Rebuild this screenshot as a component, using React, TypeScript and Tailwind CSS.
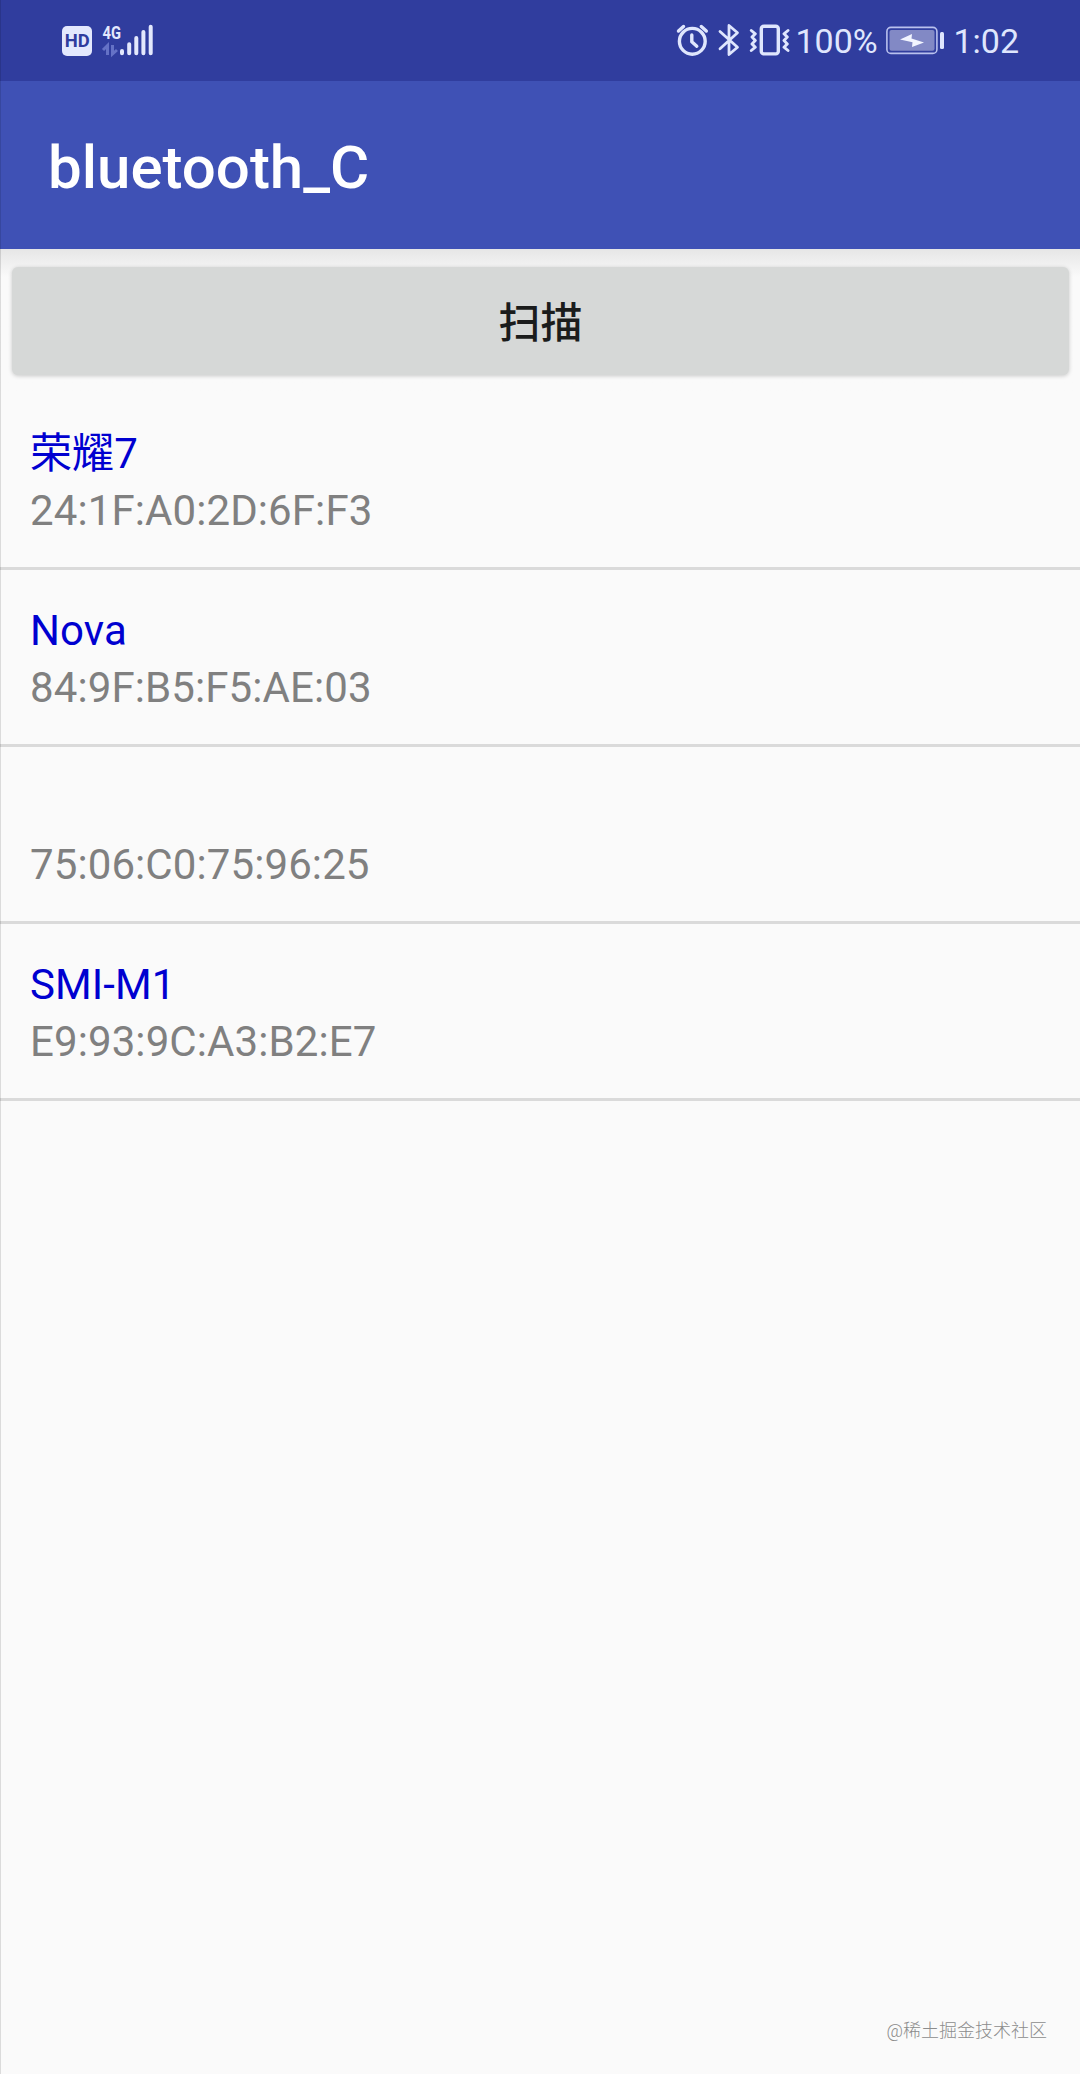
import { ReactNode } from "react";

const devices = [
  { name: "荣耀7", address: "24:1F:A0:2D:6F:F3" },
  { name: "Nova", address: "84:9F:B5:F5:AE:03" },
  { name: "", address: "75:06:C0:75:96:25" },
  { name: "SMI-M1", address: "E9:93:9C:A3:B2:E7" },
];

function SignalIcons() {
  return (
    <svg width="92" height="45" viewBox="62 18 92 45" fill="#e3e8fd">
      <rect x="62" y="26" width="30" height="30" rx="5" />
      <text
        x="64.8"
        y="47.4"
        fill="#303c9d"
        fontSize="18.5"
        fontWeight="700"
        textLength="25"
        lengthAdjust="spacingAndGlyphs"
      >
        HD
      </text>
      <text
        x="102.5"
        y="38.8"
        fontSize="19"
        fontWeight="700"
        textLength="18.5"
        lengthAdjust="spacingAndGlyphs"
      >
        4G
      </text>
      {/* Data arrows */}
      <path
        d="M103 50l4.500-4.500v9.500M112.500 45v9l4.500-4"
        fill="none"
        stroke="#6572c6"
        strokeWidth="3"
      />
      {/* Signal bars */}
      <path
        d="M122 51v2.300M129.200 44.300v9M136.300 38v15.300M143.400 32v21.300M150.700 26.700v26.600"
        stroke="#e3e8fd"
        strokeWidth="4"
        strokeLinecap="round"
      />
    </svg>
  );
}

function StatusIcon({ viewBox, width, children }: { viewBox: string; width: number; children: ReactNode }) {
  return (
    <svg
      width={width}
      height="33"
      viewBox={viewBox}
      fill="none"
      stroke="#dfe6fd"
      strokeWidth="3.4"
      strokeLinecap="round"
      strokeLinejoin="round"
    >
      {children}
    </svg>
  );
}

function StatusBar() {
  return (
    <div className="flex h-[81px] items-center justify-between bg-[#303d9e] pr-[61px] pl-[62px] text-[#dfe6fd]">
      <SignalIcons />
      <div className="flex items-center">
        {/* Alarm */}
        <StatusIcon width={34} viewBox="676 24 34 33">
          <circle cx="692.300" cy="41.300" r="12.900" />
          <path d="M691.800 35v6.800l5 4.400M678.500 31l5-4.500M701.300 26.500l5 4.500" />
        </StatusIcon>
        {/* Bluetooth */}
        <StatusIcon width={38} viewBox="710 24 38 33">
          <path
            d="M720 31.500l17.500 15.800-8.500 7.200v-29l8.500 7.200L720 48.700"
            strokeWidth="2.800"
          />
        </StatusIcon>
        {/* Vibrate */}
        <StatusIcon width={44} viewBox="748 24 44 33">
          <rect x="761.300" y="26.300" width="17" height="27.600" rx="2.500" />
          <path
            d="M751.300 30.500l4 3.300-3.300 3.300 3.300 3.400-3.300 3.400 3.300 3.300-4 3.300M788 30.500l-4 3.300 3.300 3.300-3.300 3.400 3.300 3.400-3.300 3.300 4 3.300"
            strokeWidth="2.900"
          />
        </StatusIcon>
        <span className="ml-[3px] w-[91px] text-[34px] leading-[40px]">100%</span>
        {/* Battery */}
        <StatusIcon width={60} viewBox="886 24 60 33">
          <rect x="886.900" y="27.400" width="50" height="26" rx="4" strokeWidth="1.600" stroke="#b9c1ee" />
          <rect x="889.500" y="30" width="45" height="20.800" rx="2" fill="#8289c5" stroke="none" />
          <rect x="940" y="32" width="4" height="17" rx="1.500" fill="#dfe6fd" stroke="none" />
          <path d="M900 39.500l12-5.500-.5 4.500 12.500 4-12 4.500.5-4.800z" fill="#f2f5ff" stroke="none" />
        </StatusIcon>
        <span className="ml-[7px] text-[34px] leading-[40px]">1:02</span>
      </div>
    </div>
  );
}

export default function App() {
  return (
    <div className="relative flex h-[2074px] w-[1080px] flex-col overflow-hidden bg-[#fafafa] font-['Roboto','Noto_Sans_CJK_SC',sans-serif]">
      <StatusBar />

      <header className="flex h-[168px] items-center bg-[#3f51b5] pt-[5px] pl-[48px]">
        <h1 className="text-[60px] leading-[70px] font-medium text-white">bluetooth_C</h1>
      </header>

      <div className="h-[144px] bg-linear-to-b from-[#e6e6e6] to-[#fafafa] to-[28px] pt-[18px] pr-[11px] pl-[12px]">
        <button className="flex h-[108px] w-full items-center justify-center rounded-[6px] bg-[#d6d8d7] pt-[6px] text-[42px] leading-[50px] font-medium text-[#1b1c1c] shadow-[0_1px_4px_rgba(0,0,0,0.2)]">
          扫描
        </button>
      </div>

      <ul>
        {devices.map((device) => (
          <li
            key={device.address}
            className="flex h-[177px] flex-col border-b-3 border-[#dadada] pt-[32px] pl-[30px] text-[42px] tracking-[0.1px]"
          >
            <span className="h-[57px] leading-[57px] text-[#0000d0]">{device.name}</span>
            <span className="h-[57px] leading-[57px] text-[#808080]">{device.address}</span>
          </li>
        ))}
      </ul>

      <div className="mt-auto mr-[33px] mb-[30px] self-end text-[18px] leading-[26px] font-light text-[#8c8c8c]">
        @稀土掘金技术社区
      </div>

      {/* Screen edge line */}
      <div className="absolute inset-y-0 left-0 w-px bg-black/12" />
    </div>
  );
}
